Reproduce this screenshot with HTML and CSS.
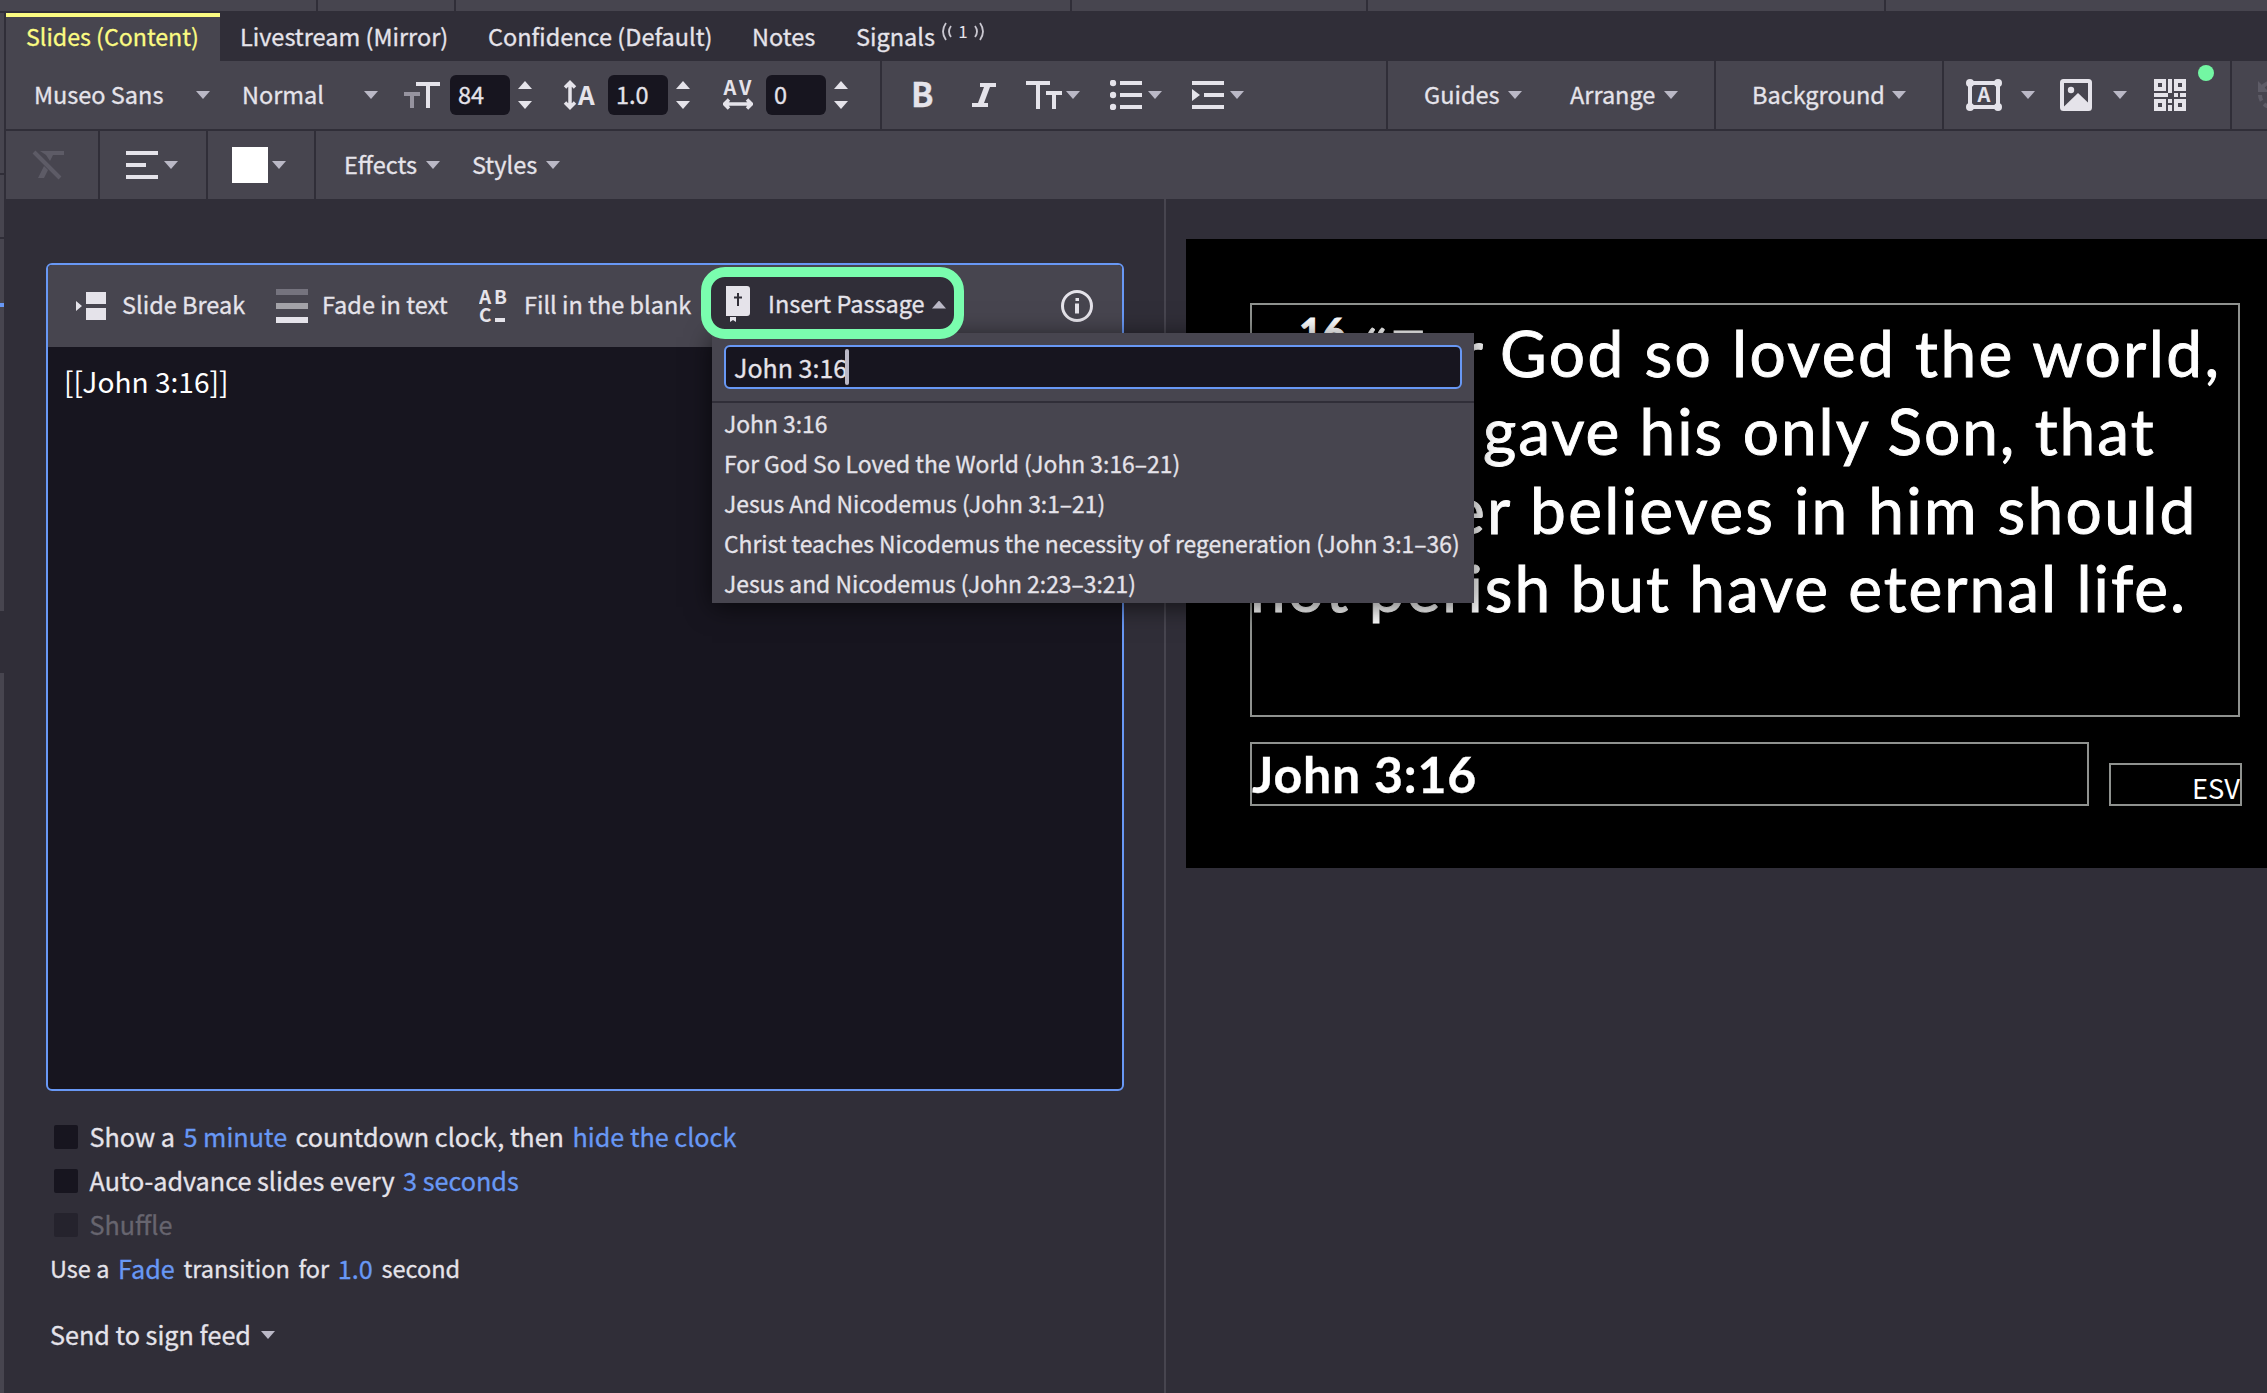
FILE: index.html
```
<!DOCTYPE html>
<html lang="en">
<head>
    <meta charset="UTF-8">
    <meta name="viewport" content="width=device-width, initial-scale=1.0">
    <title>Slide Editor</title>
    <link rel="stylesheet" href="styles.css">
</head>
<body>

    <div class="top-strip">
        <div></div><div></div><div></div><div></div><div></div><div></div>
    </div>

    <div class="main">
        <!-- edge of the item list -->
        <div class="rail">
            <div class="rail-head"></div>
            <div class="rail-row"></div>
            <div class="rail-item"></div>
            <div class="rail-selected"></div>
            <div class="rail-list"></div>
            <div class="rail-rest"></div>
        </div>

        <div class="app">
            <nav class="tabs">
                <div class="tab active">Slides (Content)</div>
                <div class="tab">Livestream (Mirror)</div>
                <div class="tab">Confidence (Default)</div>
                <div class="tab">Notes</div>
                <div class="tab">Signals
                    <svg class="signal" width="44" height="22" viewBox="0 0 44 22">
                        <path d="M5 2Q-1 10.500 5 19M10 5Q6 10.500 10 16M34 5Q38 10.500 34 16M39 2Q45 10.500 39 19" fill="none" stroke="#c9c7d0" stroke-width="1.800"/>
                        <text x="22" y="17" text-anchor="middle" font-size="17" fill="#e5e3ea">1</text>
                    </svg>
                </div>
            </nav>

            <div class="toolbar first">
                <div class="group">
                    <div class="select family"><span>Museo Sans</span><i class="caret"></i></div>
                    <div class="select weight"><span>Normal</span><i class="caret"></i></div>
                    <svg class="icon size-icon" width="36" height="28" viewBox="0 0 36 28">
                        <path d="M0 11h16v4h-6v12h-4v-12h-6z" fill="#96939f"/>
                        <path d="M12 1h24v4h-10v22h-4v-22h-10z"/>
                    </svg>
                    <div class="number size-number">84</div>
                    <div class="spinner"><i class="caret up"></i><i class="caret"></i></div>
                    <svg class="icon line-icon" width="34" height="30" viewBox="0 0 34 30">
                        <path d="M7 3v24M2 7.500l5-5 5 5M2 22.500l5 5 5-5" class="stroke"/>
                        <text x="15" y="25" font-size="26" font-weight="700">A</text>
                    </svg>
                    <div class="number line-number">1.0</div>
                    <div class="spinner"><i class="caret up"></i><i class="caret"></i></div>
                    <svg class="icon space-icon" width="30" height="30" viewBox="0 0 30 30">
                        <text x="0.500" y="15" font-size="20" font-weight="700">A</text>
                        <text x="16" y="15" font-size="20" font-weight="700">V</text>
                        <path d="M3 24h24M6 19.500l-4.500 4.500 4.500 4.500M24 19.500l4.500 4.500-4.500 4.500" class="stroke"/>
                    </svg>
                    <div class="number space-number">0</div>
                    <div class="spinner"><i class="caret up"></i><i class="caret"></i></div>
                </div>

                <div class="group">
                    <div class="bold">B</div>
                    <svg class="icon italic" width="24" height="24" viewBox="0 0 24 24">
                        <path d="M8 0h16v4h-6l-6 16h4v4h-16v-4h6l6-16h-4z"/>
                    </svg>
                    <svg class="icon gap-30" width="36" height="28" viewBox="0 0 36 28">
                        <path d="M0 0h24v4h-10v24h-4v-24h-10zM20 10h16v4h-6v14h-4v-14h-6z"/>
                    </svg>
                    <i class="caret tight"></i>
                    <svg class="icon gap-30" width="32" height="30" viewBox="0 0 32 30">
                        <circle cx="3" cy="3" r="3.200"/><circle cx="3" cy="15" r="3.200"/><circle cx="3" cy="27" r="3.200"/>
                        <path d="M10 1h22v4h-22zM10 13h22v4h-22zM10 25h22v4h-22z"/>
                    </svg>
                    <i class="caret near"></i>
                    <svg class="icon gap-30" width="32" height="28" viewBox="0 0 32 28">
                        <path d="M0 0h32v4h-32zM12 12h20v4h-20zM0 24h32v4h-32zM0 8l8 6-8 6z"/>
                    </svg>
                    <i class="caret near"></i>
                </div>

                <div class="group">
                    <div class="select guides"><span>Guides</span><i class="caret"></i></div>
                    <div class="select arrange"><span>Arrange</span><i class="caret"></i></div>
                </div>

                <div class="group">
                    <div class="select background"><span>Background</span><i class="caret"></i></div>
                </div>

                <div class="group insert-group">
                    <svg class="icon text-box" width="36" height="32" viewBox="0 0 36 32">
                        <rect x="4" y="4" width="28" height="24" fill="none" stroke="#e5e3ea" stroke-width="4"/>
                        <circle cx="4" cy="4" r="4"/><circle cx="32" cy="4" r="4"/><circle cx="4" cy="28" r="4"/><circle cx="32" cy="28" r="4"/>
                        <text x="18" y="23" text-anchor="middle" font-size="20" font-weight="700">A</text>
                    </svg>
                    <i class="caret text-caret"></i>
                    <svg class="icon image-icon" width="32" height="32" viewBox="0 0 32 32">
                        <rect x="2" y="2" width="28" height="28" rx="1.500" fill="none" stroke="#e5e3ea" stroke-width="4"/>
                        <circle cx="11" cy="11" r="3.200"/>
                        <path d="M4 27.500l14-13.500 11 10.500v5h-25z"/>
                    </svg>
                    <i class="caret image-caret"></i>
                    <svg class="icon qr-icon" width="32" height="32" viewBox="0 0 32 32">
                        <path fill-rule="evenodd" d="M0 0h12v12h-12zM4 4v4h4v-4zM20 0h12v12h-12zM24 4v4h4v-4zM0 20h12v12h-12zM4 24v4h4v-4zM20 20h12v12h-12zM24 24v4h4v-4zM14 0h4v14h-4zM0 14h14v4h-14zM20 14h4v4h-4zM26 14h6v4h-6zM14 20h4v4h-4zM14 26h4v6h-4z"/>
                    </svg>
                    <span class="dot"></span>
                </div>

                <div class="group last">
                    <svg class="icon rotate" width="32" height="30" viewBox="0 0 32 30">
                        <path d="M0 1v11h11z" fill="#5d5b66"/>
                        <path d="M4 8A13 13 0 0 1 28 14" fill="none" stroke="#5d5b66" stroke-width="4"/>
                        <path d="M2 15A13 13 0 0 0 28 14" fill="none" stroke="#5d5b66" stroke-width="4" stroke-dasharray="6 4"/>
                    </svg>
                </div>
            </div>

            <div class="toolbar second">
                <div class="group">
                    <svg class="icon clear" width="32" height="30" viewBox="0 0 32 30">
                        <path d="M8 1h24v4h-11l-3 6-4-6zM12 16l4 4-4 8h-6z" fill="#5d5b66"/>
                        <path d="M2 2l26 26" stroke="#5d5b66" stroke-width="4" fill="none"/>
                    </svg>
                </div>
                <div class="group">
                    <svg class="icon align" width="32" height="28" viewBox="0 0 32 28">
                        <path d="M0 0h32v4h-32zM0 12h20v4h-20zM0 24h32v4h-32z"/>
                    </svg>
                    <i class="caret near"></i>
                </div>
                <div class="group">
                    <div class="swatch"></div>
                    <i class="caret tight"></i>
                </div>
                <div class="group">
                    <div class="select effects"><span>Effects</span><i class="caret"></i></div>
                    <div class="select styles"><span>Styles</span><i class="caret"></i></div>
                </div>
            </div>

            <div class="content">
                <div class="left">
                    <div class="editor">
                        <div class="editor-head">
                            <svg class="icon break-icon" width="30" height="28" viewBox="0 0 30 28">
                                <path d="M10 0h20v12h-20zM10 16h20v12h-20zM0 9l6 5-6 5z"/>
                            </svg>
                            <span class="label break-label">Slide Break</span>
                            <svg class="icon" width="32" height="34" viewBox="0 0 32 34">
                                <path d="M0 0h32v6h-32z" fill="#75737e"/>
                                <path d="M0 14h32v6h-32z" fill="#a3a2a8"/>
                                <path d="M0 28h32v6h-32z"/>
                            </svg>
                            <span class="label fade-label">Fade in text</span>
                            <svg class="icon blank-icon" width="28" height="34" viewBox="0 0 28 34">
                                <text x="0" y="15" font-size="19" font-weight="700">A</text>
                                <text x="15" y="15" font-size="19" font-weight="700">B</text>
                                <text x="0" y="33" font-size="19" font-weight="700">C</text>
                                <path d="M16 29h10v4h-10z"/>
                            </svg>
                            <span class="label blank-label">Fill in the blank</span>

                            <div class="insert">
                                <div class="insert-button">
                                    <svg class="icon" width="24" height="36" viewBox="0 0 24 36">
                                        <path d="M0 0h21q3 0 3 3v24q0 3-3 3h-21zM4 31h6v5l-3-2-3 2z"/>
                                        <path d="M12 7v13M8 11.500h8" stroke="#302e38" stroke-width="2" fill="none"/>
                                    </svg>
                                    <span class="insert-label">Insert Passage</span>
                                    <i class="caret up dim"></i>
                                </div>
                                <div class="dropdown">
                                    <div class="search">John 3:16<span class="cursor"></span></div>
                                    <div class="results">
                                        <div>John 3:16</div>
                                        <div>For God So Loved the World (John 3:16–21)</div>
                                        <div>Jesus And Nicodemus (John 3:1–21)</div>
                                        <div>Christ teaches Nicodemus the necessity of regeneration (John 3:1–36)</div>
                                        <div>Jesus and Nicodemus (John 2:23–3:21)</div>
                                    </div>
                                </div>
                            </div>

                            <svg class="icon info" width="32" height="32" viewBox="0 0 32 32">
                                <circle cx="16" cy="16" r="14.500" fill="none" stroke="#e5e3ea" stroke-width="3"/>
                                <path d="M14.500 8h3.500v3h-3.500zM14 13.500h4v10h-4z"/>
                            </svg>
                        </div>
                        <div class="editor-body">[[John 3:16]]</div>
                    </div>

                    <div class="options">
                        <div class="option"><span class="check"></span><span>Show a</span><a>5 minute</a><span>countdown clock, then</span><a>hide the clock</a></div>
                        <div class="option"><span class="check"></span><span>Auto-advance slides every</span><a>3 seconds</a></div>
                        <div class="option disabled"><span class="check"></span><span>Shuffle</span></div>
                        <div class="option transition"><span>Use a</span><a>Fade</a><span>transition</span><span>for</span><a>1.0</a><span>second</span></div>
                        <div class="option feed"><span>Send to sign feed</span><i class="caret"></i></div>
                    </div>
                </div>

                <div class="right">
                    <div class="slide">
                        <div class="verse">
                            <div class="line l1"><sup>16</sup><span class="first-word">“For </span>God so loved the world,</div>
                            <div class="line l2">that he gave his only Son, that</div>
                            <div class="line l3">whoever believes in him should</div>
                            <div class="line l4">not perish but have eternal life.</div>
                        </div>
                        <div class="reference">John 3:16</div>
                        <div class="version">ESV</div>
                    </div>
                </div>
            </div>
        </div>
    </div>

</body>
</html>
```
FILE: styles.css
```
* {
    box-sizing: border-box;
}
body {
    margin: 0;
    width: 2267px;
    height: 1393px;
    overflow: hidden;
    background-color: #302e38;
    color: #e5e3ea;
    font-family: "Noto Sans CJK SC", "Noto Sans", sans-serif;
    font-size: 23.5px;
    line-height: 1;
    white-space: nowrap;
    -webkit-text-stroke: 0.3px currentColor;
}
.top-strip {
    display: grid;
    grid-template-columns: 316px 136px 614px 294px 516px 1fr;
    gap: 2px;
    height: 11px;
    margin-bottom: 2px;
}
.top-strip div {
    background-color: #47454f;
}
.main {
    display: flex;
    gap: 2px;
    height: 1380px;
}

/* left rail */
.rail {
    display: flex;
    flex-direction: column;
    width: 4px;
}
.rail div {
    background-color: #47454f;
}
.rail .rail-head { height: 160px; margin-bottom: 2px; }
.rail .rail-row { height: 62px; margin-bottom: 2px; }
.rail .rail-item { height: 64px; }
.rail .rail-selected { height: 4px; background-color: #6898f5; }
.rail .rail-list { height: 304px; margin-bottom: 62px; }
.rail .rail-rest { flex: 1; }

.app {
    width: 2261px;
}

/* tabs */
.tabs {
    display: grid;
    grid-template-columns: 214px 248px 264px 104px 200px;
    height: 48px;
}
.tab {
    display: flex;
    padding-left: 20px;
    height: 48px;
    line-height: 46px;
}
.tab.active {
    font-size: 23.2px;
    color: #fbfb82;
    background-color: #47454f;
    box-shadow: inset 0 4px 0 #fbfb82;
}
.signal {
    margin: 8px 0 0 6px;
}

/* toolbars */
.toolbar {
    display: grid;
    gap: 2px;
    height: 68px;
    margin-bottom: 2px;
}
.toolbar.first {
    grid-template-columns: 874px 504px 326px 226px 286px 1fr;
}
.toolbar.second {
    grid-template-columns: 92px 106px 106px 1fr;
    margin-bottom: 0;
}
.group {
    display: flex;
    align-items: center;
    min-width: 0;
    background-color: #47454f;
}
.icon {
    flex: none;
    fill: #e5e3ea;
}
.icon .stroke {
    fill: none;
    stroke: #e5e3ea;
    stroke-width: 3.5px;
}
.caret {
    flex: none;
    width: 14px;
    height: 8px;
    background-color: #bab8c6;
    clip-path: polygon(0 0, 100% 0, 50% 100%);
}
.caret.up {
    clip-path: polygon(0 100%, 100% 100%, 50% 0);
}
.caret.near { margin-left: 6px; }
.caret.tight { margin-left: 4px; }
.select {
    display: flex;
    align-items: center;
    justify-content: space-between;
}
.select span {
    padding-bottom: 1px;
}
.family { width: 176px; margin-left: 28px; }
.weight { width: 136px; margin-left: 32px; }
.guides { width: 98px; margin-left: 36px; }
.arrange { width: 108px; margin-left: 48px; }
.background { width: 154px; margin-left: 36px; }
.effects { width: 96px; margin-left: 28px; }
.styles { width: 88px; margin-left: 32px; }
.number {
    width: 60px;
    height: 40px;
    padding-left: 8px;
    line-height: 39px;
    border-radius: 6px;
    background-color: #17151f;
}
.spinner {
    display: flex;
    flex-direction: column;
    justify-content: space-between;
    height: 28px;
    margin-left: 8px;
}
.spinner .caret {
    background-color: #e5e3ea;
}
.size-icon { margin-left: 26px; }
.size-number { margin-left: 10px; }
.line-icon { margin-left: 31px; }
.line-number { margin-left: 11px; }
.space-icon { margin-left: 33px; }
.space-number { margin-left: 13px; }
.bold {
    width: 26px;
    margin-left: 29px;
    padding-bottom: 3px;
    font-size: 33px;
    font-weight: 700;
}
.italic { margin-left: 35px; }
.gap-30 { margin-left: 30px; }
.insert-group {
    position: relative;
}
.text-box { margin-left: 22px; }
.text-caret { margin-left: 19px; }
.image-icon { margin-left: 25px; }
.image-caret { margin-left: 21px; }
.qr-icon { margin-left: 27px; }
.dot {
    position: absolute;
    top: 4px;
    right: 16px;
    width: 16px;
    height: 16px;
    border-radius: 50%;
    background-color: #73f7a3;
}
.last {
    overflow: hidden;
}
.rotate { margin-left: 26px; }
.clear { margin-left: 26px; }
.align { margin-left: 26px; }
.swatch {
    width: 36px;
    height: 36px;
    margin-left: 24px;
    background-color: #fff;
}

/* editor */
.content {
    display: flex;
    height: 1194px;
}
.left {
    width: 1160px;
    padding: 64px 0 0 40px;
    border-right: 2px solid #47454f;
}
.editor {
    width: 1078px;
    height: 828px;
    border: 2px solid #6898f5;
    border-radius: 6px;
    background-color: #17151f;
}
.editor-head {
    display: flex;
    align-items: center;
    height: 82px;
    border-radius: 4px 4px 0 0;
    background-color: #47454f;
}
.label {
    padding-bottom: 3px;
}
.break-icon { margin-left: 28px; }
.break-label { width: 170px; padding-left: 16px; }
.fade-label { width: 172px; padding-left: 14px; }
.blank-icon { margin-left: -1px; }
.blank-label { width: 194px; padding-left: 17px; }
.insert {
    position: relative;
    width: 263px;
    margin-bottom: 6px;
}
.insert-button {
    position: relative;
    z-index: 3;
    display: flex;
    align-items: center;
    height: 72px;
    padding-left: 15px;
    border: 10px solid #7afdae;
    border-radius: 24px;
    background-color: #302e38;
}
.insert-button .icon {
    margin-top: 2px;
}
.insert-button .caret {
    margin-top: 3px;
}
.insert-label {
    width: 164px;
    margin-left: 18px;
    padding-top: 1px;
}
.dropdown {
    position: absolute;
    z-index: 2;
    top: 66px;
    left: 11px;
    width: 762px;
    height: 270px;
    padding-top: 12px;
    background-color: #47454f;
    box-shadow: 0 4px 24px rgba(0, 0, 0, 0.6);
}
.search {
    display: flex;
    align-items: center;
    height: 44px;
    margin: 0 12px;
    padding-left: 8px;
    font-size: 25px;
    border: 2px solid #6898f5;
    border-radius: 6px;
    background-color: #17151f;
}
.cursor {
    width: 4px;
    height: 36px;
    margin-left: -2px;
    border-radius: 2px;
    background-color: #bab8c6;
}
.results {
    margin-top: 12px;
    border-top: 2px solid #302e38;
    font-size: 22.87px;
}
.results div {
    height: 40px;
    padding-left: 12px;
    line-height: 40px;
}
.editor-body {
    padding: 14px 16px;
    color: #fff;
    font-size: 28.1px;
    line-height: 40px;
    -webkit-text-stroke: 0;
}
.info {
    margin-left: 97px;
    margin-bottom: 1px;
}

/* slide options */
.options {
    padding-top: 24px;
    font-size: 25.2px;
}
.option {
    display: flex;
    align-items: center;
    gap: 8.5px;
    height: 44px;
    padding-left: 8px;
}
.option a {
    color: #6898f5;
}
.check {
    width: 24px;
    height: 24px;
    margin-right: 3px;
    border-radius: 2px;
    background-color: #17151f;
}
.option.disabled {
    color: #67656f;
}
.disabled .check {
    background-color: #25232d;
}
.option.transition {
    gap: 8.7px;
    padding-left: 4px;
    font-size: 23.5px;
}
.transition a {
    font-size: 25.2px;
}
.option.feed {
    gap: 10px;
    margin-top: 22px;
    padding-left: 4px;
}

/* slide preview, objects sit freely on the canvas */
.right {
    flex: 1;
    min-width: 0;
    padding: 40px 0 0 20px;
}
.slide {
    position: relative;
    height: 629px;
    overflow: hidden;
    background-color: #000;
    color: #fff;
    font-family: Lato, sans-serif;
}
.verse, .reference, .version {
    position: absolute;
    border: 2px solid #8f928f;
}
.verse {
    left: 64px;
    top: 64px;
    width: 990px;
    height: 414px;
    padding-top: 9px;
    font-size: 64px;
    line-height: 78.3px;
    -webkit-text-stroke: 0.9px #fff;
}
.l1 { padding-left: 47px; letter-spacing: 2.4px; }
.l2 { letter-spacing: 1.97px; }
.l3 { letter-spacing: 2.3px; }
.l4 { letter-spacing: 1.97px; margin-left: -2px; }
.first-word {
    letter-spacing: 0.9px;
}
.line sup {
    display: inline-block;
    width: 65px;
    font-size: 40px;
    font-weight: 700;
    line-height: 0;
    letter-spacing: 0;
    vertical-align: 30px;
}
.reference {
    left: 64px;
    top: 503px;
    width: 839px;
    height: 64px;
    font-size: 50px;
    font-weight: 700;
    line-height: 61px;
    letter-spacing: 0.8px;
}
.version {
    left: 923px;
    top: 524px;
    width: 133px;
    height: 43px;
    font-family: "Noto Sans CJK SC", "Noto Sans", sans-serif;
    font-size: 27.3px;
    line-height: 45px;
    text-align: right;
    text-indent: 2px;
    -webkit-text-stroke: 0;
}
```
